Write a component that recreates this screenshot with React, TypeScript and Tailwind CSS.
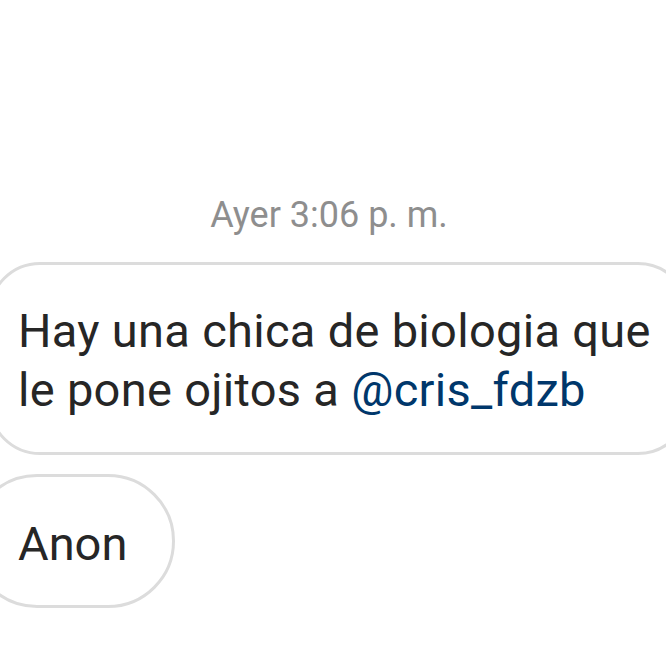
import React from "react";

export default function App() {
  return (
    <div
      className="w-[666px] h-[666px] overflow-hidden bg-white"
      style={{ fontFamily: "Roboto, 'Noto Sans', sans-serif" }}
    >
      <div className="pt-[195px] flex flex-col">
        <div className="text-center text-[36px] leading-[41px] text-[#8e8e8e] mr-[8px]">
          Ayer 3:06 p. m.
        </div>
        <div className="mt-[26px] ml-[-12px] w-[702px] rounded-[52px] border-[3px] border-[#dcdcdc] pl-[27px] pt-[36px] pb-[33px] text-[47px] tracking-[0.3px] leading-[59px] text-[#262626] whitespace-nowrap">
          Hay una chica de biologia que
          <br />
          le pone ojitos a <span className="text-[#00376b]">@cris_fdzb</span>
        </div>
        <div className="mt-[19px] ml-[-30px] self-start h-[134px] rounded-full border-[3px] border-[#dcdcdc] pl-[45px] pr-[45px] pt-[37px] text-[47px] leading-[59px] text-[#262626]">
          Anon
        </div>
      </div>
    </div>
  );
}
